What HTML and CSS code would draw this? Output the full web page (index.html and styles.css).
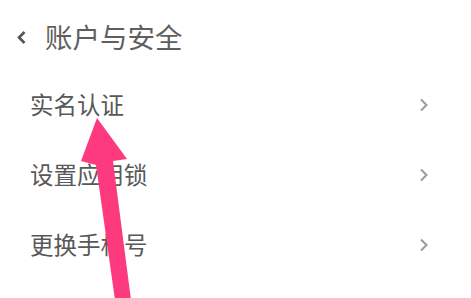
FILE: index.html
```html
<!DOCTYPE html>
<html>
    <head>
    <title>账户与安全</title>
    <meta charset="utf-8">
    <link rel="stylesheet" href="styles.css">
    </head>
    <body>
        <div class="page">
            <div class="header">
                <svg class="back" width="11" height="15" viewBox="0 0 11 15">
                    <polyline points="8.5,2 3,7.5 8.5,13" fill="none" stroke="#555" stroke-width="2.6"/>
                </svg>
                <span class="title">账户与安全</span>
            </div>

            <div class="list">
                <div class="row">
                    <span class="label">实名认证</span>
                    <svg class="arrow" width="10" height="14" viewBox="0 0 10 14">
                        <polyline points="2,1.5 7.5,7 2,12.5" fill="none" stroke="#9a9a9a" stroke-width="2"/>
                    </svg>
                </div>
                <div class="row">
                    <span class="label">设置应用锁</span>
                    <svg class="arrow" width="10" height="14" viewBox="0 0 10 14">
                        <polyline points="2,1.5 7.5,7 2,12.5" fill="none" stroke="#9a9a9a" stroke-width="2"/>
                    </svg>
                </div>
                <div class="row">
                    <span class="label">更换手机号</span>
                    <svg class="arrow" width="10" height="14" viewBox="0 0 10 14">
                        <polyline points="2,1.5 7.5,7 2,12.5" fill="none" stroke="#9a9a9a" stroke-width="2"/>
                    </svg>
                </div>
            </div>

            <!-- annotation arrow drawn over the list -->
            <svg class="pointer" width="471" height="298" viewBox="0 0 471 298">
                <polygon points="97,118 127,159 113,161 131,300 115,300 96,165 81,161" fill="#fd3a7e"/>
            </svg>
        </div>
    </body>
</html>
```

FILE: styles.css
```css
body{
    margin: 0;
    background-color: #ffffff;
    font-family: "Noto Sans CJK SC", "Noto Sans", sans-serif;
}
.page{
    position: relative;
    width: 471px;
    height: 298px;
    overflow: hidden;
}
.header{
    height: 70px;
    display: flex;
    align-items: center;
    padding-left: 16px;
}
.back{
    margin-right: 18px;
    margin-top: 4px;
}
.title{
    font-size: 27.5px;
    color: #5f5f5f;
    line-height: 1;
    margin-top: 4px;
}
.list{
    display: flex;
    flex-direction: column;
}
.row{
    height: 70px;
    display: flex;
    align-items: center;
    justify-content: space-between;
    padding-left: 30px;
    padding-right: 42px;
}
.label{
    font-size: 23.5px;
    color: #585858;
    line-height: 1;
}
.pointer{
    position: absolute;
    left: 0;
    top: 0;
}
```
